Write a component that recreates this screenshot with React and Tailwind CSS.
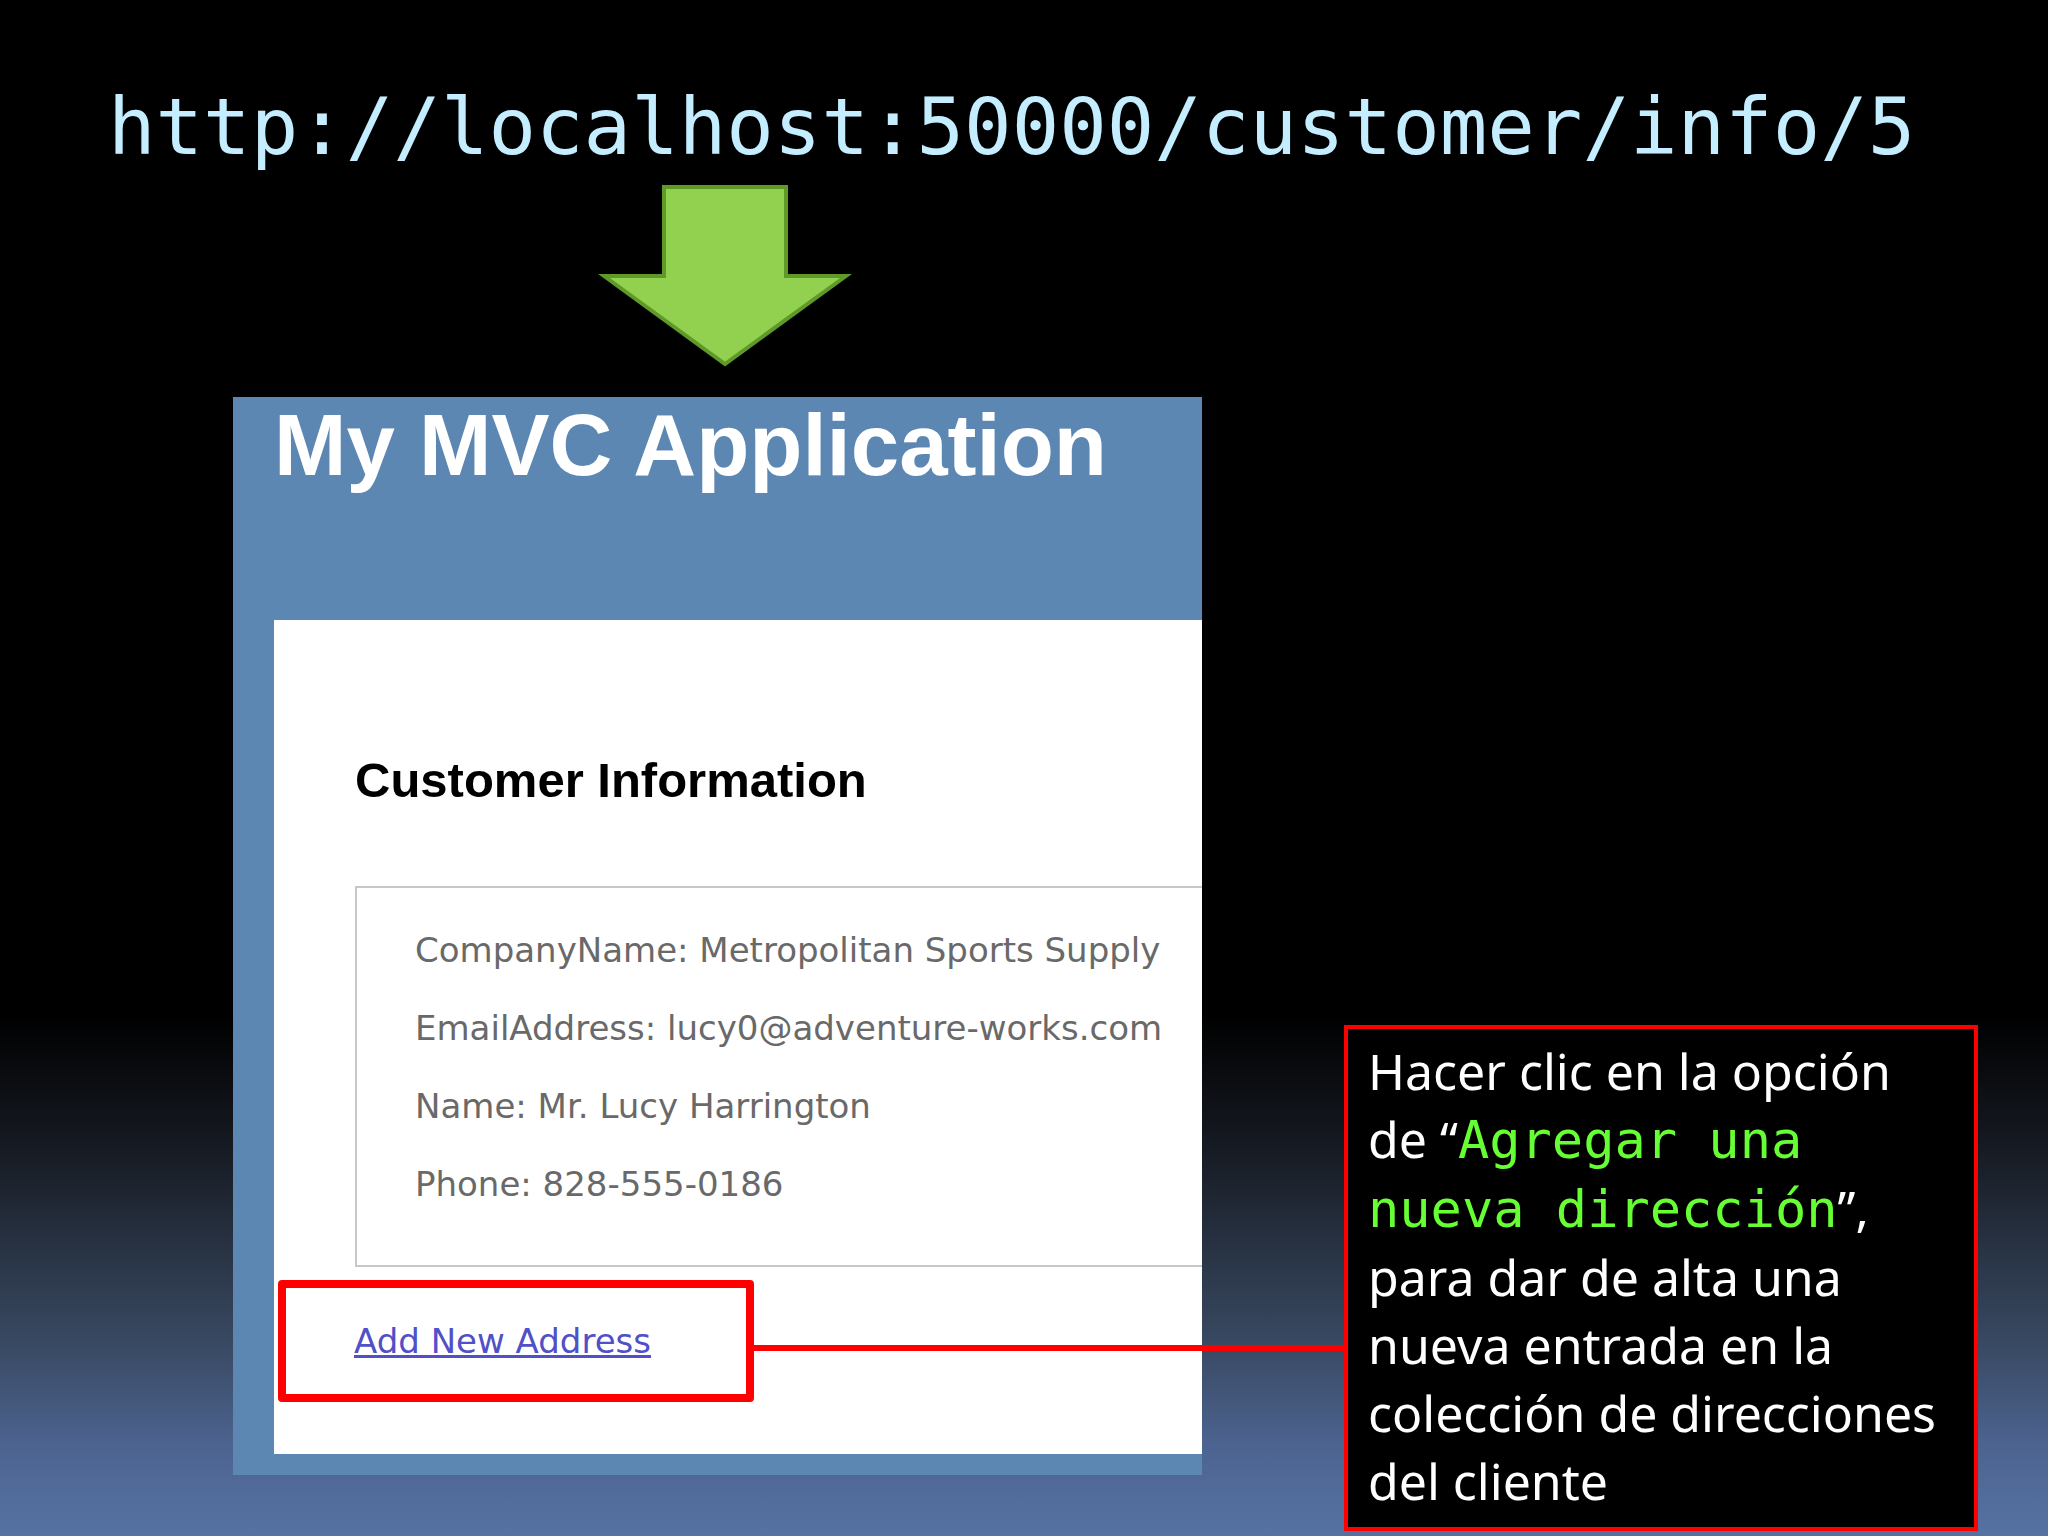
const customerFields = [
  { label: "CompanyName", value: "Metropolitan Sports Supply" },
  { label: "EmailAddress", value: "lucy0@adventure-works.com" },
  { label: "Name", value: "Mr. Lucy Harrington" },
  { label: "Phone", value: "828-555-0186" },
];

const DownArrow = () => (
  <svg
    className="block h-[182px] w-[254px]"
    viewBox="0 0 254 182"
    aria-hidden="true"
  >
    <path
      d="M66 2H188V91H248L127 179L6 91H66Z"
      fill="#92d050"
      stroke="#5f9a28"
      strokeWidth="4"
    />
  </svg>
);

const CustomerPage = () => (
  <section className="mb-14 ml-[233px] min-w-0 flex-1 bg-[#5c87b2] pb-[21px] pl-[41px]">
    <h2 className="mb-[132px] whitespace-nowrap pt-[5px] font-['Liberation_Sans',Arial,sans-serif] text-[87px] leading-[86px] font-bold text-white">
      My MVC Application
    </h2>
    <div className="bg-white pt-[132px] pb-[52px]">
      <div className="pl-[81px]">
        <h3 className="mb-[78px] whitespace-nowrap font-['Liberation_Sans',Arial,sans-serif] text-[49px] leading-[56px] font-bold text-black">
          Customer Information
        </h3>
        {/* the right side of the box runs past the edge of the page */}
        <div className="border-2 border-r-0 border-[#c8c8c8] pt-[23px] pb-[42px] pl-[58px]">
          {customerFields.map((field) => (
            <p
              key={field.label}
              className="whitespace-nowrap font-['DejaVu_Sans',Verdana,sans-serif] text-[34px] leading-[78px] text-[#696969]"
            >
              {field.label}: {field.value}
            </p>
          ))}
        </div>
      </div>
      <div className="mt-[13px] ml-1 flex h-[122px] w-[476px] items-center rounded-[4px] border-8 border-[#ff0000] pl-[68px]">
        <a
          href="#"
          className="whitespace-nowrap font-['DejaVu_Sans',Verdana,sans-serif] text-[34px] leading-[40px] text-[#5050c8] underline"
        >
          Add New Address
        </a>
      </div>
    </div>
  </section>
);

const Callout = () => (
  <aside className="mr-[70px] ml-[142px] w-[634px] shrink-0 border-4 border-[#ff0000] bg-black pt-2 pb-3 pl-5">
    <p className="whitespace-nowrap font-['Noto_Sans',sans-serif] text-[50px] leading-[68px] text-white">
      Hacer clic en la opción
      <br />
      de “
      <span className="font-['DejaVu_Sans_Mono',monospace] text-[52px] text-[#66ff33]">
        Agregar una
        <br />
        nueva dirección
      </span>
      ”,
      <br />
      para dar de alta una
      <br />
      nueva entrada en la
      <br />
      colección de direcciones
      <br />
      del cliente
    </p>
  </aside>
);

export default function App() {
  return (
    <div className="min-h-screen overflow-hidden bg-[linear-gradient(to_bottom,#000_66%,#14181f_74%,#252e3d_80%,#3a4b65_88%,#4c6390_94%,#5672a2_100%)] pb-[5px]">
      <header className="pt-[87px] pl-[108px]">
        <h1 className="whitespace-nowrap font-['DejaVu_Sans_Mono',monospace] text-[79px] leading-[80px] text-[#c4eeff]">
          http://localhost:50000/customer/info/5
        </h1>
        <div className="mt-[18px] mb-[30px] pl-[490px]">
          <DownArrow />
        </div>
      </header>
      <main className="relative flex items-end">
        <CustomerPage />
        <Callout />
        {/* connector from the highlighted link to the callout */}
        <div className="absolute right-[704px] bottom-[180px] left-[753px] h-1.5 bg-[#ff0000]" />
      </main>
    </div>
  );
}
